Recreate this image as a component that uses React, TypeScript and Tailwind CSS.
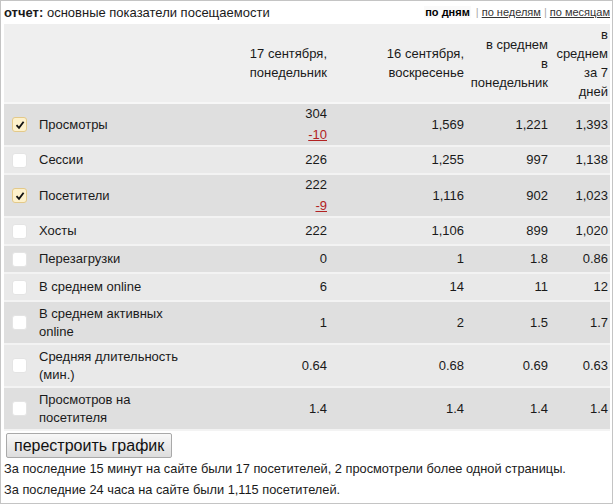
import React from "react";

type Row = {
  label: string;
  checked: boolean;
  v1: string;
  delta?: string;
  v2: string;
  v3: string;
  v4: string;
  tall?: boolean;
};

const rows: Row[] = [
  { label: "Просмотры", checked: true, v1: "304", delta: "-10", v2: "1,569", v3: "1,221", v4: "1,393", tall: true },
  { label: "Сессии", checked: false, v1: "226", v2: "1,255", v3: "997", v4: "1,138" },
  { label: "Посетители", checked: true, v1: "222", delta: "-9", v2: "1,116", v3: "902", v4: "1,023", tall: true },
  { label: "Хосты", checked: false, v1: "222", v2: "1,106", v3: "899", v4: "1,020" },
  { label: "Перезагрузки", checked: false, v1: "0", v2: "1", v3: "1.8", v4: "0.86" },
  { label: "В среднем online", checked: false, v1: "6", v2: "14", v3: "11", v4: "12" },
  { label: "В среднем активных online", checked: false, v1: "1", v2: "2", v3: "1.5", v4: "1.7", tall: true },
  { label: "Средняя длительность (мин.)", checked: false, v1: "0.64", v2: "0.68", v3: "0.69", v4: "0.63", tall: true },
  { label: "Просмотров на посетителя", checked: false, v1: "1.4", v2: "1.4", v3: "1.4", v4: "1.4", tall: true },
];

function Check({ checked }: { checked: boolean }) {
  if (checked) {
    return (
      <span className="inline-flex h-[15px] w-[15px] items-center justify-center rounded-[3px] border border-[#e3c98a] bg-[#fdf1cc]">
        <svg width="10" height="10" viewBox="0 0 10 10">
          <path d="M1.5 5.2 L4 7.8 L8.6 1.8" fill="none" stroke="#111" strokeWidth="1.8" />
        </svg>
      </span>
    );
  }
  return <span className="inline-block h-[15px] w-[15px] rounded-[3px] border border-[#e4e4e4] bg-white" />;
}

export default function App() {
  return (
    <div
      className="h-[504px] w-[613px] border border-[#c4c4c4] text-[13px] text-[#1a1a1a]"
      style={{ fontFamily: '"Liberation Sans", Arial, sans-serif' }}
    >
      <div className="flex h-[23px] items-center justify-between pl-[3px] pr-[2px]">
        <div>
          <span className="font-bold">отчет:</span> основные показатели посещаемости
        </div>
        <div className="text-[11px] text-[#333]">
          <span className="bg-[#fafafa] px-[1px] font-bold text-black">по дням</span>
          <span className="ml-[5px] mr-[3px] text-[#aaa]">|</span>
          <span className="underline">по неделям</span>
          <span className="mx-[3px] text-[#aaa]">|</span>
          <span className="underline">по месяцам</span>
        </div>
      </div>
      <table className="ml-[3px] w-[606px] table-fixed border-separate border-spacing-0">
        <colgroup>
          <col className="w-[30px]" />
          <col className="w-[166px]" />
          <col className="w-[131px]" />
          <col className="w-[137px]" />
          <col className="w-[84px]" />
          <col className="w-[58px]" />
        </colgroup>
        <thead>
          <tr className="bg-[#efefef] align-middle leading-[19px]">
            <th className="h-[80px] border-b-2 border-[#f7f7f7]" />
            <th className="border-b-2 border-[#f7f7f7]" />
            <th className="border-b-2 border-[#f7f7f7] pr-[4px] text-right font-normal">
              17 сентября,
              <br />
              понедельник
            </th>
            <th className="border-b-2 border-[#f7f7f7] pr-[4px] text-right font-normal">
              16 сентября,
              <br />
              воскресенье
            </th>
            <th className="border-b-2 border-[#f7f7f7] pr-[4px] text-right font-normal">
              в среднем
              <br />в<br />
              понедельник
            </th>
            <th className="border-b-2 border-[#f7f7f7] pr-[2px] text-right font-normal">
              в<br />
              среднем
              <br />
              за 7<br />
              дней
            </th>
          </tr>
        </thead>
        <tbody>
          {rows.map((r, i) => {
            const bg = i % 2 === 0 ? "bg-[#dfdfdf]" : "bg-[#e9e9e9]";
            const h = r.tall ? "h-[43px]" : "h-[28px]";
            return (
              <tr key={r.label} className={`${bg} align-middle leading-[18px]`}>
                <td className={`${h} border-b-2 border-[#f3f3f3] pl-[8px]`}>
                  <div className="flex items-center">
                    <Check checked={r.checked} />
                  </div>
                </td>
                <td className="border-b-2 border-[#f3f3f3] pl-[5px]">
                  <div className="w-[148px]">{r.label}</div>
                </td>
                <td className={`border-b-2 border-[#f3f3f3] pr-[4px] text-right ${r.delta ? "align-top" : ""}`}>
                  {r.delta ? (
                    <div className="pt-[1px]">
                      <div>{r.v1}</div>
                      <div className="mt-[3px] text-[#b22222] underline">{r.delta}</div>
                    </div>
                  ) : (
                    r.v1
                  )}
                </td>
                <td className="border-b-2 border-[#f3f3f3] pr-[4px] text-right">{r.v2}</td>
                <td className="border-b-2 border-[#f3f3f3] pr-[4px] text-right">{r.v3}</td>
                <td className="border-b-2 border-[#f3f3f3] pr-[2px] text-right">{r.v4}</td>
              </tr>
            );
          })}
        </tbody>
      </table>
      <div className="pl-[5px] pt-[2px]">
        <button className="h-[25px] rounded-[2px] border border-[#a9a9a9] bg-gradient-to-b from-[#f8f8f8] to-[#dddddd] px-[7px] text-[16px] leading-[20px] text-[#111]">
          перестроить график
        </button>
      </div>
      <div className="pl-[3px] text-[12.8px] leading-[21px]">
        <div>За последние 15 минут на сайте были 17 посетителей, 2 просмотрели более одной страницы.</div>
        <div>За последние 24 часа на сайте были 1,115 посетителей.</div>
      </div>
    </div>
  );
}
